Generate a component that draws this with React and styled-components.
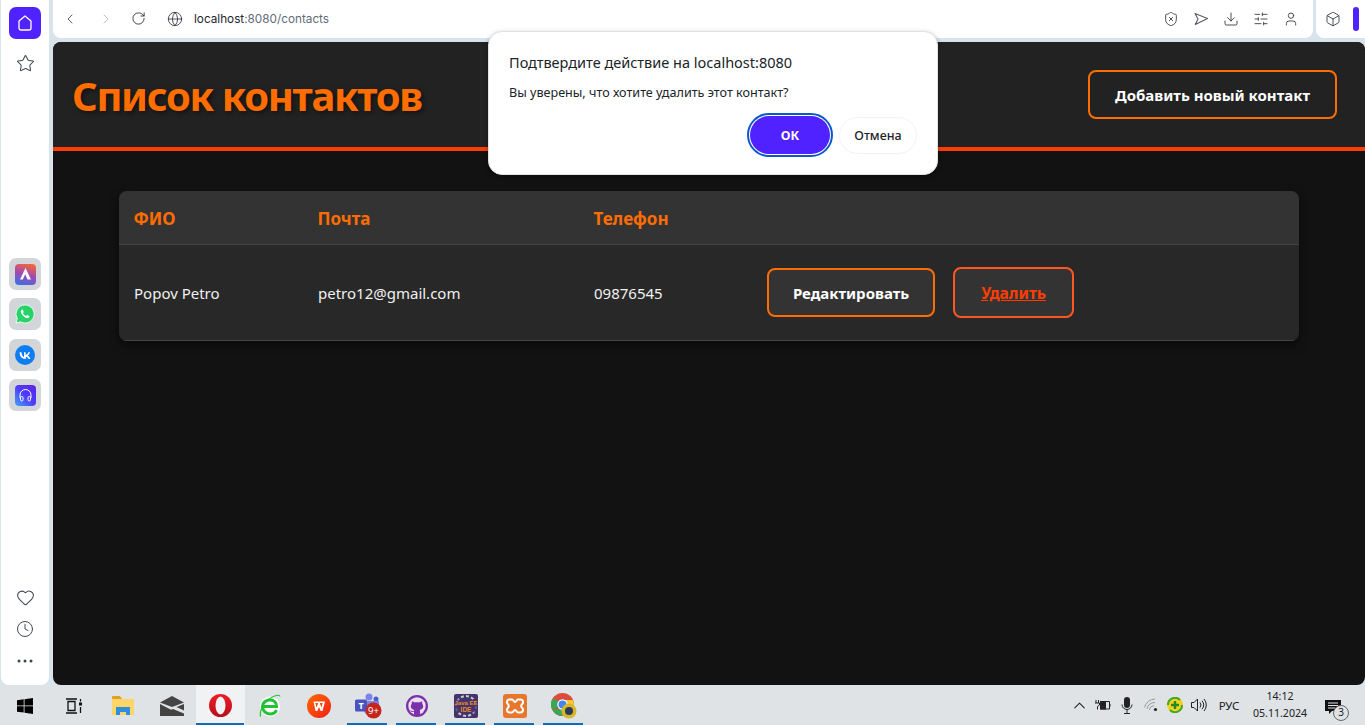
import React from "react";
import styled, { createGlobalStyle } from "styled-components";
import {
  ChevronLeft, ChevronRight, RotateCw, Globe, ShieldX, Download, SlidersHorizontal,
  User, Box, Star, Heart, Clock, ChevronUp,
} from "lucide-react";

const Global = createGlobalStyle`
  html, body { margin: 0; padding: 0; height: 100%; overflow: hidden; background: #d9e3ec; }
  * { box-sizing: border-box; }
  body { font-family: "Noto Sans", "Open Sans", sans-serif; }
`;

const Screen = styled.div`
  position: relative;
  width: 1365px;
  height: 725px;
  display: flex;
  flex-direction: column;
  overflow: hidden;
  background: #d9e3ec;
`;
const Upper = styled.div`
  flex: 0 0 685px;
  display: flex;
`;
const Sidebar = styled.aside`
  width: 48px;
  margin-left: 1px;
  background: #fff;
  border-radius: 0 0 8px 8px;
  display: flex;
  flex-direction: column;
  align-items: center;
  padding: 7px 0 8px;
`;
const HomeTile = styled.div`
  width: 32px;
  height: 32px;
  border-radius: 7px;
  background: #4f22ff;
  display: flex;
  align-items: center;
  justify-content: center;
`;
const SideIcon = styled.div`
  height: 32px;
  width: 32px;
  display: flex;
  align-items: center;
  justify-content: center;
  color: #3f4650;
  margin-top: ${(p) => p.$top || 0}px;
`;
const AppTiles = styled.div`
  margin-top: 179px;
  display: flex;
  flex-direction: column;
  gap: 8.4px;
`;
const AppTile = styled.div`
  width: 32px;
  height: 32px;
  border-radius: 7px;
  background: #d2d6d9;
  display: flex;
  align-items: center;
  justify-content: center;
`;
const SideBottom = styled.div`
  margin-top: auto;
  display: flex;
  flex-direction: column;
  align-items: center;
`;
const Right = styled.div`
  flex: 1;
  margin-left: 4px;
  display: flex;
  flex-direction: column;
  min-width: 0;
`;
const TopRow = styled.div`
  flex: 0 0 38px;
  display: flex;
  gap: 3px;
  margin-bottom: 4px;
`;
const AddressBar = styled.div`
  flex: 1;
  background: #fff;
  border-radius: 0 0 8px 8px;
  display: flex;
  align-items: center;
  padding: 0 13px 1px 9px;
`;
const NavIcon = styled.div`
  width: 16px;
  height: 16px;
  margin-right: ${(p) => p.$gap}px;
  display: flex;
  align-items: center;
  justify-content: center;
  color: ${(p) => p.$color || "#30363d"};
`;
const Url = styled.div`
  font-family: Inter, sans-serif;
  font-size: 11.75px;
  color: #23272d;
  white-space: nowrap;
`;
const UrlRest = styled.span`
  color: #5f6b78;
`;
const ToolIcons = styled.div`
  margin-left: auto;
  display: flex;
  gap: 12px;
  color: #30363d;
`;
const ToolIcon = styled.div`
  width: 18px;
  height: 18px;
  display: flex;
  align-items: center;
  justify-content: center;
`;
const ExtBox = styled.div`
  flex: 0 0 49px;
  background: #fff;
  border-radius: 0 0 0 8px;
  display: flex;
  align-items: center;
  padding-left: 9px;
  gap: 12px;
  color: #30363d;
`;
const ExtBar = styled.div`
  width: 6px;
  height: 24px;
  border-radius: 3px;
  background: #4f22ff;
`;
const Page = styled.main`
  flex: 1;
  background: #121212;
  border-radius: 8px;
  overflow: hidden;
`;
const Header = styled.header`
  height: 109px;
  background: #222;
  border-bottom: 4px solid #ff3d00;
  display: flex;
  align-items: center;
  justify-content: space-between;
  padding: 0 28px 0 19px;
`;
const Title = styled.h1`
  margin: 2px 0 0;
  font-size: 40px;
  line-height: 54px;
  letter-spacing: -1.35px;
  font-weight: 700;
  color: #ff6d00;
  text-shadow: 2px 2px 5px rgba(0, 0, 0, 0.5);
`;
const Button = styled.button`
  font-family: inherit;
  font-size: ${(p) => (p.$danger ? 15.5 : 15)}px;
  font-weight: 700;
  color: ${(p) => (p.$danger ? "#ff3d00" : "#fff")};
  background: ${(p) => p.$bg || "#333"};
  border: 2px solid ${(p) => (p.$danger ? "#ff5722" : "#ff6d00")};
  border-radius: 8px;
  text-decoration: ${(p) => (p.$danger ? "underline" : "none")};
  height: ${(p) => p.$h}px;
  width: ${(p) => p.$w}px;
  padding: 0;
  display: inline-flex;
  align-items: center;
  justify-content: center;
  white-space: nowrap;
`;
const TableWrap = styled.section`
  margin: 40px 66px 0;
  border-radius: 8px;
  overflow: hidden;
  box-shadow: 0 4px 10px rgba(0, 0, 0, 0.5);
`;
const GridRow = styled.div`
  display: grid;
  grid-template-columns: 184px 276px 173px 1fr;
  align-items: center;
  height: ${(p) => p.$h}px;
  background: ${(p) => p.$bg};
  border-bottom: 1px solid #444;
`;
const HeadCell = styled.div`
  padding: 1px 0 0 14.5px;
  font-size: 17px;
  font-weight: 700;
  color: #ff6d00;
`;
const Cell = styled.div`
  padding-left: 15px;
  font-size: 15px;
  color: #f0f0f0;
`;
const Actions = styled.div`
  padding-left: 15px;
  display: flex;
  align-items: center;
  gap: 18px;
`;
const Taskbar = styled.footer`
  flex: 0 0 40px;
  background: #dfe3e6;
  display: flex;
  align-items: stretch;
`;
const TaskItem = styled.div`
  position: relative;
  flex: 0 0 49px;
  display: flex;
  align-items: center;
  justify-content: center;
  padding-top: 1px;
  background: ${(p) => (p.$active ? "#f0f2f4" : "transparent")};
  &::after {
    content: "";
    position: absolute;
    left: ${(p) => (p.$active ? "0" : "4px")};
    right: ${(p) => (p.$active ? "1px" : "5px")};
    bottom: 0;
    height: 2px;
    background: ${(p) => (p.$run ? "#0f6cbd" : "transparent")};
  }
`;
const Tray = styled.div`
  margin-left: auto;
  display: flex;
  align-items: center;
  padding-right: 20px;
  color: #222;
`;
const TraySlot = styled.div`
  width: ${(p) => p.$w}px;
  display: flex;
  justify-content: center;
  align-items: center;
`;
const Lang = styled.div`
  font-size: 11.5px;
  color: #222;
  width: 32px;
  text-align: center;
`;
const ClockBox = styled.div`
  width: 56px;
  margin-left: 7px;
  text-align: center;
  font-size: 10.6px;
  line-height: 17px;
  color: #222;
  white-space: nowrap;
`;
const Notify = styled.div`
  position: relative;
  margin-left: 13px;
  width: 24px;
  height: 24px;
  padding: 5px 0 0 4px;
`;
const NotifyBadge = styled.div`
  position: absolute;
  left: 12px;
  top: 12px;
  width: 16px;
  height: 16px;
  border-radius: 50%;
  border: 1.5px solid #666;
  background: #dfe3e6;
  font-size: 10px;
  line-height: 13px;
  text-align: center;
  color: #222;
`;
const Modal = styled.div`
  position: absolute;
  left: 488px;
  top: 31px;
  width: 450px;
  height: 144px;
  background: #fff;
  border: 1px solid #dfe3e8;
  border-radius: 14px;
  padding: 20px 20px 0;
  box-shadow: 0 2px 5px rgba(0, 0, 0, 0.35);
  color: #202428;
`;
const ModalTitle = styled.div`
  font-size: 14.5px;
  line-height: 20px;
  font-weight: 400;
`;
const ModalText = styled.div`
  margin-top: 12px;
  font-size: 12.6px;
  line-height: 18px;
`;
const ModalActions = styled.div`
  margin-top: 14px;
  display: flex;
  justify-content: flex-end;
  align-items: center;
  gap: 9px;
`;
const OkButton = styled.button`
  width: 80px;
  height: 38px;
  border-radius: 19px;
  border: 0;
  background: #4f22ff;
  color: #fff;
  font-family: inherit;
  font-size: 12.5px;
  font-weight: 700;
  outline: 2.5px solid #0b57d0;
  outline-offset: 1px;
`;
const CancelButton = styled.button`
  width: 78px;
  height: 37px;
  border-radius: 19px;
  border: 1px solid #f1f3f6;
  background: #fff;
  color: #202428;
  font-family: inherit;
  font-size: 12.5px;
  font-weight: 500;
`;

const SendIcon = () => (
  <svg width="16" height="16" viewBox="0 0 16 16" fill="none" stroke="#555c66" strokeWidth="1.1" strokeLinejoin="round">
    <path d="M2 2.500 14.500 7.500 2.300 13.500 5 8z" />
  </svg>
);

const HomeIcon = () => (
  <svg width="18" height="18" viewBox="0 0 18 18" fill="none" stroke="#fff" strokeWidth="1.3" strokeLinejoin="round">
    <path d="M9 2 3 7v7.200A1.800 1.800 0 0 0 4.800 16h8.400a1.800 1.800 0 0 0 1.800-1.800V7z" />
  </svg>
);

const AriaIcon = () => (
  <svg width="21" height="21" viewBox="0 0 21 21">
    <defs>
      <linearGradient id="aria" x1="0.6" y1="0" x2="0.3" y2="1">
        <stop offset="0" stopColor="#f0643c" />
        <stop offset="0.5" stopColor="#a04ab8" />
        <stop offset="1" stopColor="#3f6fe0" />
      </linearGradient>
    </defs>
    <rect width="21" height="21" rx="4" fill="url(#aria)" />
    <path d="M10.500 4 5 15.500h2.800l2.400-5.200 2.300 5.200H16z" fill="#fff" />
  </svg>
);

const WhatsappIcon = () => (
  <svg width="20" height="20" viewBox="0 0 20 20">
    <path d="M10 1a9 9 0 0 0-7.700 13.600L1 19l4.600-1.200A9 9 0 1 0 10 1z" fill="#25d366" stroke="#fff" strokeWidth="0.8" />
    <path d="M7 5.500c-.6.300-1.300 1.200-1.100 2.400.3 2.300 3.400 5.700 6.100 6.200 1.300.2 2.200-.6 2.400-1.300.1-.4 0-.7-.2-.8l-1.800-.9c-.3-.1-.5 0-.6.200l-.7.800c-1.300-.4-2.700-1.700-3.200-3l.7-.7c.2-.2.2-.4.100-.6l-.8-1.900c-.2-.4-.5-.5-.9-.4z" fill="#fff" />
  </svg>
);

const VkIcon = () => (
  <svg width="20" height="20" viewBox="0 0 20 20">
    <circle cx="10" cy="10" r="10" fill="#0f7df2" />
    <path d="M10.500 14c-3.700 0-5.800-2.500-5.900-6.700h1.900c.1 3 1.400 4.300 2.500 4.600V7.300h1.700v2.600c1.100-.1 2.200-1.300 2.600-2.600H15c-.3 1.600-1.500 2.800-2.400 3.300.9.400 2.300 1.500 2.800 3.400h-1.900c-.4-1.300-1.400-2.200-2.700-2.300V14z" fill="#fff" />
  </svg>
);

const MusicIcon = () => (
  <svg width="21" height="21" viewBox="0 0 21 21">
    <defs>
      <linearGradient id="music" x1="0" y1="1" x2="1" y2="0">
        <stop offset="0" stopColor="#3fa5ff" />
        <stop offset="0.5" stopColor="#4f3bff" />
        <stop offset="1" stopColor="#5a22e8" />
      </linearGradient>
    </defs>
    <rect width="21" height="21" rx="4" fill="url(#music)" />
    <path d="M5 13V10a5.500 5.500 0 0 1 11 0v3" fill="none" stroke="#fff" strokeWidth="1" />
    <rect x="5.500" y="11.500" width="2.500" height="4.500" rx="1.200" fill="none" stroke="#fff" strokeWidth="1" />
    <rect x="13" y="11.500" width="2.500" height="4.500" rx="1.200" fill="none" stroke="#fff" strokeWidth="1" />
  </svg>
);

const WindowsIcon = () => (
  <svg width="16" height="16" viewBox="0 0 16 16" fill="#000">
    <path d="M0 2.300 6.700 1.300v6.200H0zM7.500 1.200 16 0v7.500H7.500zM0 8.300h6.700v6.300L0 13.700zM7.500 8.300H16V16l-8.500-1.200z" />
  </svg>
);

const TaskViewIcon = () => (
  <svg width="18" height="16" viewBox="0 0 18 16" fill="none" stroke="#111" strokeWidth="1.300">
    <path d="M1 1h11M1 15h11M3 3.500h7v9H3zM15.500 1v2.500M15.500 9v6" />
    <rect x="14" y="4.500" width="3" height="3" fill="#111" stroke="none" />
  </svg>
);

const FolderIcon = () => (
  <svg width="22" height="19" viewBox="0 0 22 19">
    <path d="M0 1a1 1 0 0 1 1-1h7l2 3h11a1 1 0 0 1 1 1v2H0z" fill="#e0a020" />
    <path d="M0 3h22v15a1 1 0 0 1-1 1H1a1 1 0 0 1-1-1z" fill="#fcd669" />
    <path d="M4 19V11h14v8h-4v-3H8v3z" fill="#2f8fdc" />
  </svg>
);

const MailIcon = () => (
  <svg width="24" height="20" viewBox="0 0 24 20">
    <path d="M0 6.500 12 0l12 6.500-12 4.500z" fill="#444" />
    <path d="M0 8v12h24v-2.500L13 13l-2 .8zM24 8l-7.500 3 7.500 3.500z" fill="#444" />
  </svg>
);

const OperaIcon = () => (
  <svg width="23" height="23" viewBox="0 0 23 23">
    <defs>
      <linearGradient id="opera" x1="0" y1="0" x2="0" y2="1">
        <stop offset="0" stopColor="#f01c28" />
        <stop offset="1" stopColor="#b80d1c" />
      </linearGradient>
    </defs>
    <circle cx="11.500" cy="11.500" r="11.500" fill="url(#opera)" />
    <ellipse cx="11.500" cy="11.500" rx="5" ry="9" fill="#f0f2f4" />
  </svg>
);

const EdgeLikeIcon = () => (
  <svg width="22" height="24" viewBox="0 0 22 24">
    <circle cx="11" cy="12.500" r="10" fill="#fff" />
    <path d="M3.500 12.500h14c.3-4-2.500-6.500-6.500-6.500S3.500 8.500 3.500 12.500c0 4.500 3.500 7.500 7.500 7.500 3 0 5.500-1.500 6.500-4" fill="none" stroke="#22c332" strokeWidth="3" />
    <path d="M1.500 22.500c-1-4 1.500-13 8.500-17.500s11-4.500 11-2.500" fill="none" stroke="#22c332" strokeWidth="1.100" />
  </svg>
);

const WpsIcon = () => (
  <svg width="24" height="24" viewBox="0 0 24 24">
    <defs>
      <linearGradient id="wps" x1="0" y1="0" x2="1" y2="1">
        <stop offset="0" stopColor="#ff6a00" />
        <stop offset="1" stopColor="#f0201c" />
      </linearGradient>
    </defs>
    <circle cx="12" cy="12" r="12" fill="url(#wps)" />
    <path d="M6.500 7.500h11.500L15.500 17h-1.800L12 13l-1.700 4H8.500zM8.300 9l1.300 4.500L11.200 9zM12.800 9l1.600 4.500L15.700 9z" fill="#fff" fillRule="evenodd" />
  </svg>
);

const TeamsIcon = () => (
  <svg width="28" height="26" viewBox="0 0 28 26">
    <circle cx="15" cy="4" r="3.500" fill="#7b83eb" />
    <circle cx="22" cy="6" r="2.500" fill="#5059c9" />
    <path d="M10 8h15v9a5 5 0 0 1-5 5h-5a5 5 0 0 1-5-5z" fill="#7b83eb" />
    <rect x="1" y="6.500" width="12" height="12" rx="1.500" fill="#4b53bc" />
    <text x="7" y="16" fontSize="9" fontWeight="700" fill="#fff" textAnchor="middle" fontFamily="Noto Sans">T</text>
    <circle cx="19.500" cy="17.500" r="8" fill="#c4261d" />
    <text x="19.500" y="21" fontSize="9.500" fill="#fff" textAnchor="middle" fontFamily="Noto Sans">9+</text>
  </svg>
);

const GithubIcon = () => (
  <svg width="22" height="22" viewBox="0 0 22 22">
    <circle cx="11" cy="11" r="11" fill="#7b2fa8" />
    <circle cx="11" cy="11" r="8.700" fill="#e8dff0" />
    <path d="M8 20v-3c-2 .4-3-.4-3.500-1.800 1.500.3 2 1.400 3.500 1-.1-.5 0-1 .4-1.300-2-.3-3.600-1.400-3.600-3.600 0-1 .3-1.800 1-2.500-.2-.8-.1-1.500.2-2.300 1 0 1.800.5 2.500 1 1.300-.4 3.700-.4 5 0 .7-.5 1.500-1 2.500-1 .3.800.4 1.500.2 2.300.7.7 1 1.500 1 2.500 0 2.200-1.600 3.300-3.600 3.600.4.400.5.900.5 1.500V20a9 9 0 0 1-6 0z" fill="#7b2fa8" />
  </svg>
);

const JavaIcon = () => (
  <svg width="24" height="24" viewBox="0 0 24 24">
    <rect width="24" height="24" rx="2" fill="#43346e" />
    <circle cx="12" cy="12" r="10" fill="none" stroke="#c9c9c9" strokeWidth="2" strokeDasharray="3 2.200" />
    <rect x="1" y="5.500" width="22" height="13" fill="#43346e" opacity="0.75" />
    <text x="12" y="11" fontSize="6" fontWeight="700" fill="#ef8a1d" textAnchor="middle" fontFamily="Liberation Sans">Java EE</text>
    <text x="12" y="17.500" fontSize="6.500" fontWeight="700" fill="#ef8a1d" textAnchor="middle" fontFamily="Liberation Sans">IDE</text>
  </svg>
);

const XamppIcon = () => (
  <svg width="24" height="24" viewBox="0 0 24 24">
    <rect width="24" height="24" rx="3" fill="#e8772e" />
    <path d="M6.500 5.500h2.500c1.500 0 1.500 2.500 3 2.500s1.500-2.500 3-2.500h2.500c2.800 0 3.200 3.500 1.500 4.800-1 .8-1 2.600 0 3.400 1.700 1.300 1.300 4.800-1.500 4.800H15c-1.500 0-1.500-2.500-3-2.500s-1.500 2.500-3 2.500H6.500c-2.800 0-3.200-3.500-1.500-4.800 1-.8 1-2.600 0-3.400C3.300 9 3.700 5.500 6.500 5.500z" fill="none" stroke="#fff" strokeWidth="2" />
  </svg>
);

const ChromeIcon = () => (
  <svg width="26" height="26" viewBox="0 0 26 26">
    <circle cx="11.500" cy="11.500" r="11.500" fill="#dd4b3e" />
    <path d="M11.500 11.500 1.500 17.200A11.500 11.500 0 0 1 1.500 5.800L6 7z" fill="#3aa757" />
    <path d="M1.500 17.200A11.500 11.500 0 0 0 11.500 23l5-9z" fill="#3aa757" />
    <path d="M22 7H11.500l5 7-5 9A11.500 11.500 0 0 0 22 7z" fill="#fdc92f" />
    <circle cx="11.500" cy="11.500" r="5.200" fill="#fff" />
    <circle cx="11.500" cy="11.500" r="4" fill="#4285f4" />
    <circle cx="18" cy="18" r="7.500" fill="#d8b72c" />
    <circle cx="18" cy="18" r="4" fill="#2c3a5a" />
  </svg>
);

const BatteryIcon = () => (
  <svg width="16" height="12" viewBox="0 0 16 12" fill="none" stroke="#222" strokeWidth="1">
    <path d="M5.500 2.500H14.500V10H5.500M15 5v2.500" />
    <rect x="5.500" y="2.500" width="5" height="7.500" fill="#222" />
    <path d="M1 1v3M3.500 1v3M0 4h4.500v2L2.500 7.500v3" />
  </svg>
);

const MicIcon = () => (
  <svg width="12" height="17" viewBox="0 0 12 17">
    <rect x="3" y="0" width="6" height="11" rx="3" fill="#222" />
    <path d="M1 7.500a5 5 0 0 0 10 0M6 12.500V16M3 16.500h6" fill="none" stroke="#222" strokeWidth="1" />
  </svg>
);

const WifiIcon = () => (
  <svg width="14" height="14" viewBox="0 0 14 14" fill="none" stroke="#999" strokeWidth="1">
    <path d="M.5 9.500A11 11 0 0 1 11 1M3 11a7.500 7.500 0 0 1 8-6.500M5.500 12A4.500 4.500 0 0 1 10 8" />
    <circle cx="11.500" cy="11.500" r="1.600" fill="#222" stroke="none" />
  </svg>
);

const ShieldPlusIcon = () => (
  <svg width="16" height="16" viewBox="0 0 16 16">
    <circle cx="8" cy="8" r="8" fill="#f3d11f" />
    <path d="M1 8a7 7 0 0 1 12-5M15 8a7 7 0 0 1-12 5" fill="none" stroke="#3da62c" strokeWidth="2" />
    <path d="M6.800 4h2.400v2.800H12v2.400H9.200V12H6.800V9.200H4V6.800h2.800z" fill="#1f8a2a" />
  </svg>
);

const VolumeIcon = () => (
  <svg width="16" height="14" viewBox="0 0 16 14" fill="none" stroke="#222" strokeWidth="1">
    <path d="M.5 4.500H3L6.500 1v12L3 9.500H.5zM9 4.500a4 4 0 0 1 0 5M11 2.800a6.500 6.500 0 0 1 0 8.400M13 1a9 9 0 0 1 0 12" />
  </svg>
);

const BubbleIcon = () => (
  <svg width="17" height="15" viewBox="0 0 17 15">
    <path d="M0 0h16v11H7l-3 3v-3H0z" fill="#111" />
    <path d="M3 3h10M3 5.500h10M3 8h7" stroke="#dfe3e6" strokeWidth="1" />
  </svg>
);

const tasks = [
  { icon: <WindowsIcon /> },
  { icon: <TaskViewIcon /> },
  { icon: <FolderIcon /> },
  { icon: <MailIcon /> },
  { icon: <OperaIcon />, run: true, active: true },
  { icon: <EdgeLikeIcon /> },
  { icon: <WpsIcon /> },
  { icon: <TeamsIcon />, run: true },
  { icon: <GithubIcon />, run: true },
  { icon: <JavaIcon />, run: true },
  { icon: <XamppIcon />, run: true },
  { icon: <ChromeIcon />, run: true },
];

export default function App() {
  return (
    <Screen>
      <Global />
      <Upper>
        <Sidebar>
          <HomeTile><HomeIcon /></HomeTile>
          <SideIcon $top={8}><Star size={19} strokeWidth={1.3} /></SideIcon>
          <AppTiles>
            <AppTile><AriaIcon /></AppTile>
            <AppTile><WhatsappIcon /></AppTile>
            <AppTile><VkIcon /></AppTile>
            <AppTile><MusicIcon /></AppTile>
          </AppTiles>
          <SideBottom>
            <SideIcon><Heart size={19} strokeWidth={1.3} /></SideIcon>
            <SideIcon><Clock size={18} strokeWidth={1.3} /></SideIcon>
            <SideIcon>
              <svg width="16" height="4" viewBox="0 0 16 4" fill="#3f4650">
                <circle cx="2" cy="2" r="1.500" /><circle cx="8" cy="2" r="1.500" /><circle cx="14" cy="2" r="1.500" />
              </svg>
            </SideIcon>
          </SideBottom>
        </Sidebar>
        <Right>
          <TopRow>
            <AddressBar>
              <NavIcon $gap={20}><ChevronLeft size={16} strokeWidth={1.2} /></NavIcon>
              <NavIcon $gap={16} $color="#aab2ba"><ChevronRight size={16} strokeWidth={1.2} /></NavIcon>
              <NavIcon $gap={21}><RotateCw size={15} strokeWidth={1.5} /></NavIcon>
              <NavIcon $gap={11}><Globe size={16} strokeWidth={1.3} /></NavIcon>
              <Url>localhost<UrlRest>:8080/contacts</UrlRest></Url>
              <ToolIcons>
                <ToolIcon><ShieldX size={16} strokeWidth={1.3} /></ToolIcon>
                <ToolIcon><SendIcon /></ToolIcon>
                <ToolIcon><Download size={16} strokeWidth={1.3} /></ToolIcon>
                <ToolIcon><SlidersHorizontal size={16} strokeWidth={1.3} /></ToolIcon>
                <ToolIcon><User size={16} strokeWidth={1.3} /></ToolIcon>
              </ToolIcons>
            </AddressBar>
            <ExtBox>
              <Box size={16} strokeWidth={1.3} />
              <ExtBar />
            </ExtBox>
          </TopRow>
          <Page>
            <Header>
              <Title>Список контактов</Title>
              <Button $bg="#222" $w={249} $h={49}>Добавить новый контакт</Button>
            </Header>
            <TableWrap>
              <GridRow $h={54} $bg="#333">
                <HeadCell>ФИО</HeadCell>
                <HeadCell>Почта</HeadCell>
                <HeadCell>Телефон</HeadCell>
                <div />
              </GridRow>
              <GridRow $h={96} $bg="#282828">
                <Cell>Popov Petro</Cell>
                <Cell>petro12@gmail.com</Cell>
                <Cell>09876545</Cell>
                <Actions>
                  <Button $w={168} $h={49}>Редактировать</Button>
                  <Button $danger $w={121} $h={51}>Удалить</Button>
                </Actions>
              </GridRow>
            </TableWrap>
          </Page>
        </Right>
      </Upper>
      <Taskbar>
        {tasks.map((t, i) => (
          <TaskItem key={i} $run={t.run} $active={t.active}>{t.icon}</TaskItem>
        ))}
        <Tray>
          <TraySlot $w={20}><ChevronUp size={19} strokeWidth={1.3} /></TraySlot>
          <TraySlot $w={28}><BatteryIcon /></TraySlot>
          <TraySlot $w={20}><MicIcon /></TraySlot>
          <TraySlot $w={28}><WifiIcon /></TraySlot>
          <TraySlot $w={20}><ShieldPlusIcon /></TraySlot>
          <TraySlot $w={28}><VolumeIcon /></TraySlot>
          <Lang>РУС</Lang>
          <ClockBox>14:12<br />05.11.2024</ClockBox>
          <Notify>
            <BubbleIcon />
            <NotifyBadge>3</NotifyBadge>
          </Notify>
        </Tray>
      </Taskbar>
      <Modal>
        <ModalTitle>Подтвердите действие на localhost:8080</ModalTitle>
        <ModalText>Вы уверены, что хотите удалить этот контакт?</ModalText>
        <ModalActions>
          <OkButton>ОК</OkButton>
          <CancelButton>Отмена</CancelButton>
        </ModalActions>
      </Modal>
    </Screen>
  );
}
